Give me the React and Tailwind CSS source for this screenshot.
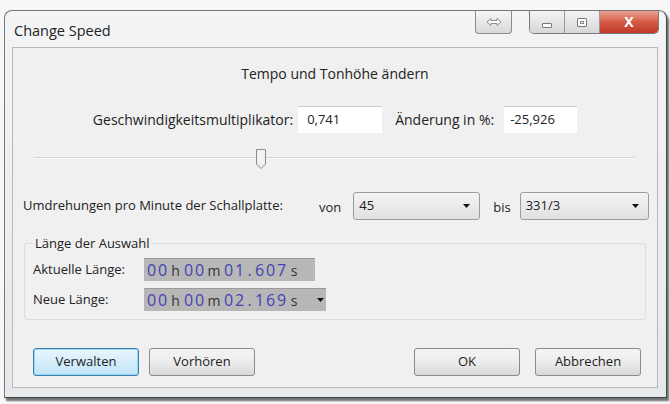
import React from "react";

function Caret() {
  return (
    <svg width="7" height="4" viewBox="0 0 7 4">
      <path d="M0 0h7L3.5 4z" fill="#111" />
    </svg>
  );
}

function Select({ value, width }) {
  return (
    <div
      className={`${width} h-[28px] flex items-center justify-between pl-[5px] pr-[9px] rounded-[3px] border border-[#9c9c9c] bg-linear-to-b from-[#f4f4f4] to-[#e0e0e0] text-[13px] text-[#222]`}
    >
      <span>{value}</span>
      <Caret />
    </div>
  );
}

function TimeBox({ groups, width, arrow }) {
  return (
    <div
      className={`${width} h-[23px] flex items-center pl-[2px] bg-[#b7b7b7] border-t border-[#9a9a9a]`}
    >
      {groups.map((g, i) =>
        Array.isArray(g) ? (
          g.map((d, j) => (
            <span key={`${i}-${j}`} className="w-[11px] text-center text-[16px] font-medium text-[#4343b5]">
              {d}
            </span>
          ))
        ) : (
          <span
            key={i}
            className={`text-center ${g === "." ? "w-[9px] text-[#4343b5] text-[16px] font-medium" : g === "m" ? "w-[18px] text-[14px] text-[#333]" : g === "h" ? "w-[15px] text-[14px] text-[#333]" : "w-[14px] text-[14px] text-[#333]"}`}
          >
            {g}
          </span>
        )
      )}
      {arrow && (
        <span className="ml-auto mr-[2px] flex items-center">
          <Caret />
        </span>
      )}
    </div>
  );
}

function Button({ label, focused }) {
  return (
    <div
      className={
        focused
          ? "w-[106px] h-[28px] rounded-[3px] border border-[#3c7fb1] bg-linear-to-b from-[#eaf6fd] to-[#bfe4f8] shadow-[inset_0_0_0_1px_#9ad6f3] flex items-center justify-center text-[13px] text-[#222]"
          : "w-[106px] h-[28px] rounded-[3px] border border-[#8a8a8a] bg-linear-to-b from-[#f4f4f4] via-[#ececec] to-[#d9d9d9] flex items-center justify-center text-[13px] text-[#222]"
      }
    >
      {label}
    </div>
  );
}

export default function App() {
  const aktuelle = [["0", "0"], "h", ["0", "0"], "m", ["0", "1"], ".", ["6", "0", "7"], "s"];
  const neue = [["0", "0"], "h", ["0", "0"], "m", ["0", "2"], ".", ["1", "6", "9"], "s"];

  return (
    <div className="w-[670px] h-[404px] bg-[#f7f7f7] pt-[10px] pl-[4px] overflow-hidden font-['Open_Sans',sans-serif]">
      <div className="w-[663px] h-[388px] rounded-t-[8px] border border-[#777] border-r-[#444] border-b-[#444] bg-linear-to-b from-[#f3f4f6] to-[#e6e9ec] shadow-[2px_3px_2px_rgba(0,0,0,0.55)] flex flex-col pl-[7px] pr-[8px]">
        {/* title bar */}
        <div className="h-[36px] flex items-start justify-between">
          <div className="pt-[9px] pl-[2px] text-[14.5px] text-[#222]">Change Speed</div>
          <div className="flex items-start">
            <div className="w-[37px] h-[23px] rounded-b-[4px] border border-t-0 border-[#8c8c8c] bg-linear-to-b from-[#f6f6f6] to-[#d9d9d9] flex items-center justify-center">
              <svg width="16" height="10" viewBox="0 0 16 10">
                <path
                  d="M1 5L5 1.5V3.5H11V1.5L15 5L11 8.5V6.5H5V8.5Z"
                  fill="#fdfdfd"
                  stroke="#8a8a8a"
                  strokeWidth="1"
                  strokeLinejoin="round"
                />
              </svg>
            </div>
            <div className="ml-[17px] mr-[-1px] flex h-[23px] rounded-b-[5px] border border-t-0 border-[#7a7a7a] overflow-hidden">
              <div className="w-[35px] bg-linear-to-b from-[#f4f4f4] to-[#d7d7d7] border-r border-[#9a9a9a] flex items-center justify-center">
                <div className="w-[10px] h-[5px] mt-[6px] border border-[#777] rounded-[1px] bg-white" />
              </div>
              <div className="w-[35px] bg-linear-to-b from-[#f4f4f4] to-[#d7d7d7] border-r border-[#9a9a9a] flex items-center justify-center">
                <div className="w-[10px] h-[9px] border border-[#777] rounded-[1px] bg-white flex items-center justify-center">
                  <div className="w-[4px] h-[3px] border border-[#888]" />
                </div>
              </div>
              <div className="w-[58px] bg-linear-to-b from-[#e9a292] via-[#d35a44] to-[#c0392b] flex items-center justify-center">
                <span className="text-[14px] font-bold text-white leading-none">X</span>
              </div>
            </div>
          </div>
        </div>

        {/* client */}
        <div className="w-[646px] h-[341px] border border-[#b9b9b9] bg-[#f0f0f0] flex flex-col text-[13px] text-[#222]">
          <div className="h-[50px] flex items-center justify-center text-[14px]">Tempo und Tonhöhe ändern</div>

          <div className="mt-[8px] h-[27px] flex items-center justify-center text-[14px]">
            <span>Geschwindigkeitsmultiplikator:</span>
            <div className="ml-[5px] w-[84px] h-[27px] bg-white border-t border-[#cfcfcf] flex items-center pl-[9px] text-[13px]">0,741</div>
            <span className="ml-[13px]">Änderung in %:</span>
            <div className="ml-[10px] w-[73px] h-[27px] bg-white border-t border-[#cfcfcf] flex items-center pl-[6px] text-[13px]">-25,926</div>
          </div>

          <div className="mt-[15px] h-[22px] mx-[21px] relative">
            <div className="absolute left-0 right-0 top-[9px] h-[2px] bg-[#d4d4d4] border-b border-[#fafafa]" />
            <svg className="absolute left-[221px] top-0" width="12" height="22" viewBox="0 0 12 22">
              <path
                d="M1.5 1.5H10.5V16L6 20.5L1.5 16Z"
                fill="#f2f2f2"
                stroke="#8a8a8a"
                strokeWidth="1"
                strokeLinejoin="round"
              />
            </svg>
          </div>

          <div className="mt-[22px] h-[28px] flex items-center pl-[10px]">
            <span>Umdrehungen pro Minute der Schallplatte:</span>
            <span className="ml-[36px] mt-[4px]">von</span>
            <div className="ml-[12px]">
              <Select value="45" width="w-[127px]" />
            </div>
            <span className="ml-[13px] mt-[4px]">bis</span>
            <div className="ml-[9px]">
              <Select value="331/3" width="w-[129px]" />
            </div>
          </div>

          <div className="mt-[23px] mx-[11px] h-[77px] border border-[#d8dde2] rounded-[3px] relative flex flex-col pl-[8px]">
            <span className="absolute left-[8px] top-[-10px] px-[2px] bg-[#f0f0f0] text-[13px]">Länge der Auswahl</span>
            <div className="mt-[14px] flex items-center">
              <span className="w-[111px]">Aktuelle Länge:</span>
              <TimeBox groups={aktuelle} width="w-[171px]" />
            </div>
            <div className="mt-[7px] flex items-center">
              <span className="w-[111px]">Neue Länge:</span>
              <TimeBox groups={neue} width="w-[182px]" arrow />
            </div>
          </div>

          <div className="mt-[28px] flex items-center pl-[20px] pr-[16px]">
            <Button label="Verwalten" focused />
            <div className="ml-[10px]">
              <Button label="Vorhören" />
            </div>
            <div className="ml-auto">
              <Button label="OK" />
            </div>
            <div className="ml-[15px]">
              <Button label="Abbrechen" />
            </div>
          </div>
        </div>
      </div>
    </div>
  );
}
